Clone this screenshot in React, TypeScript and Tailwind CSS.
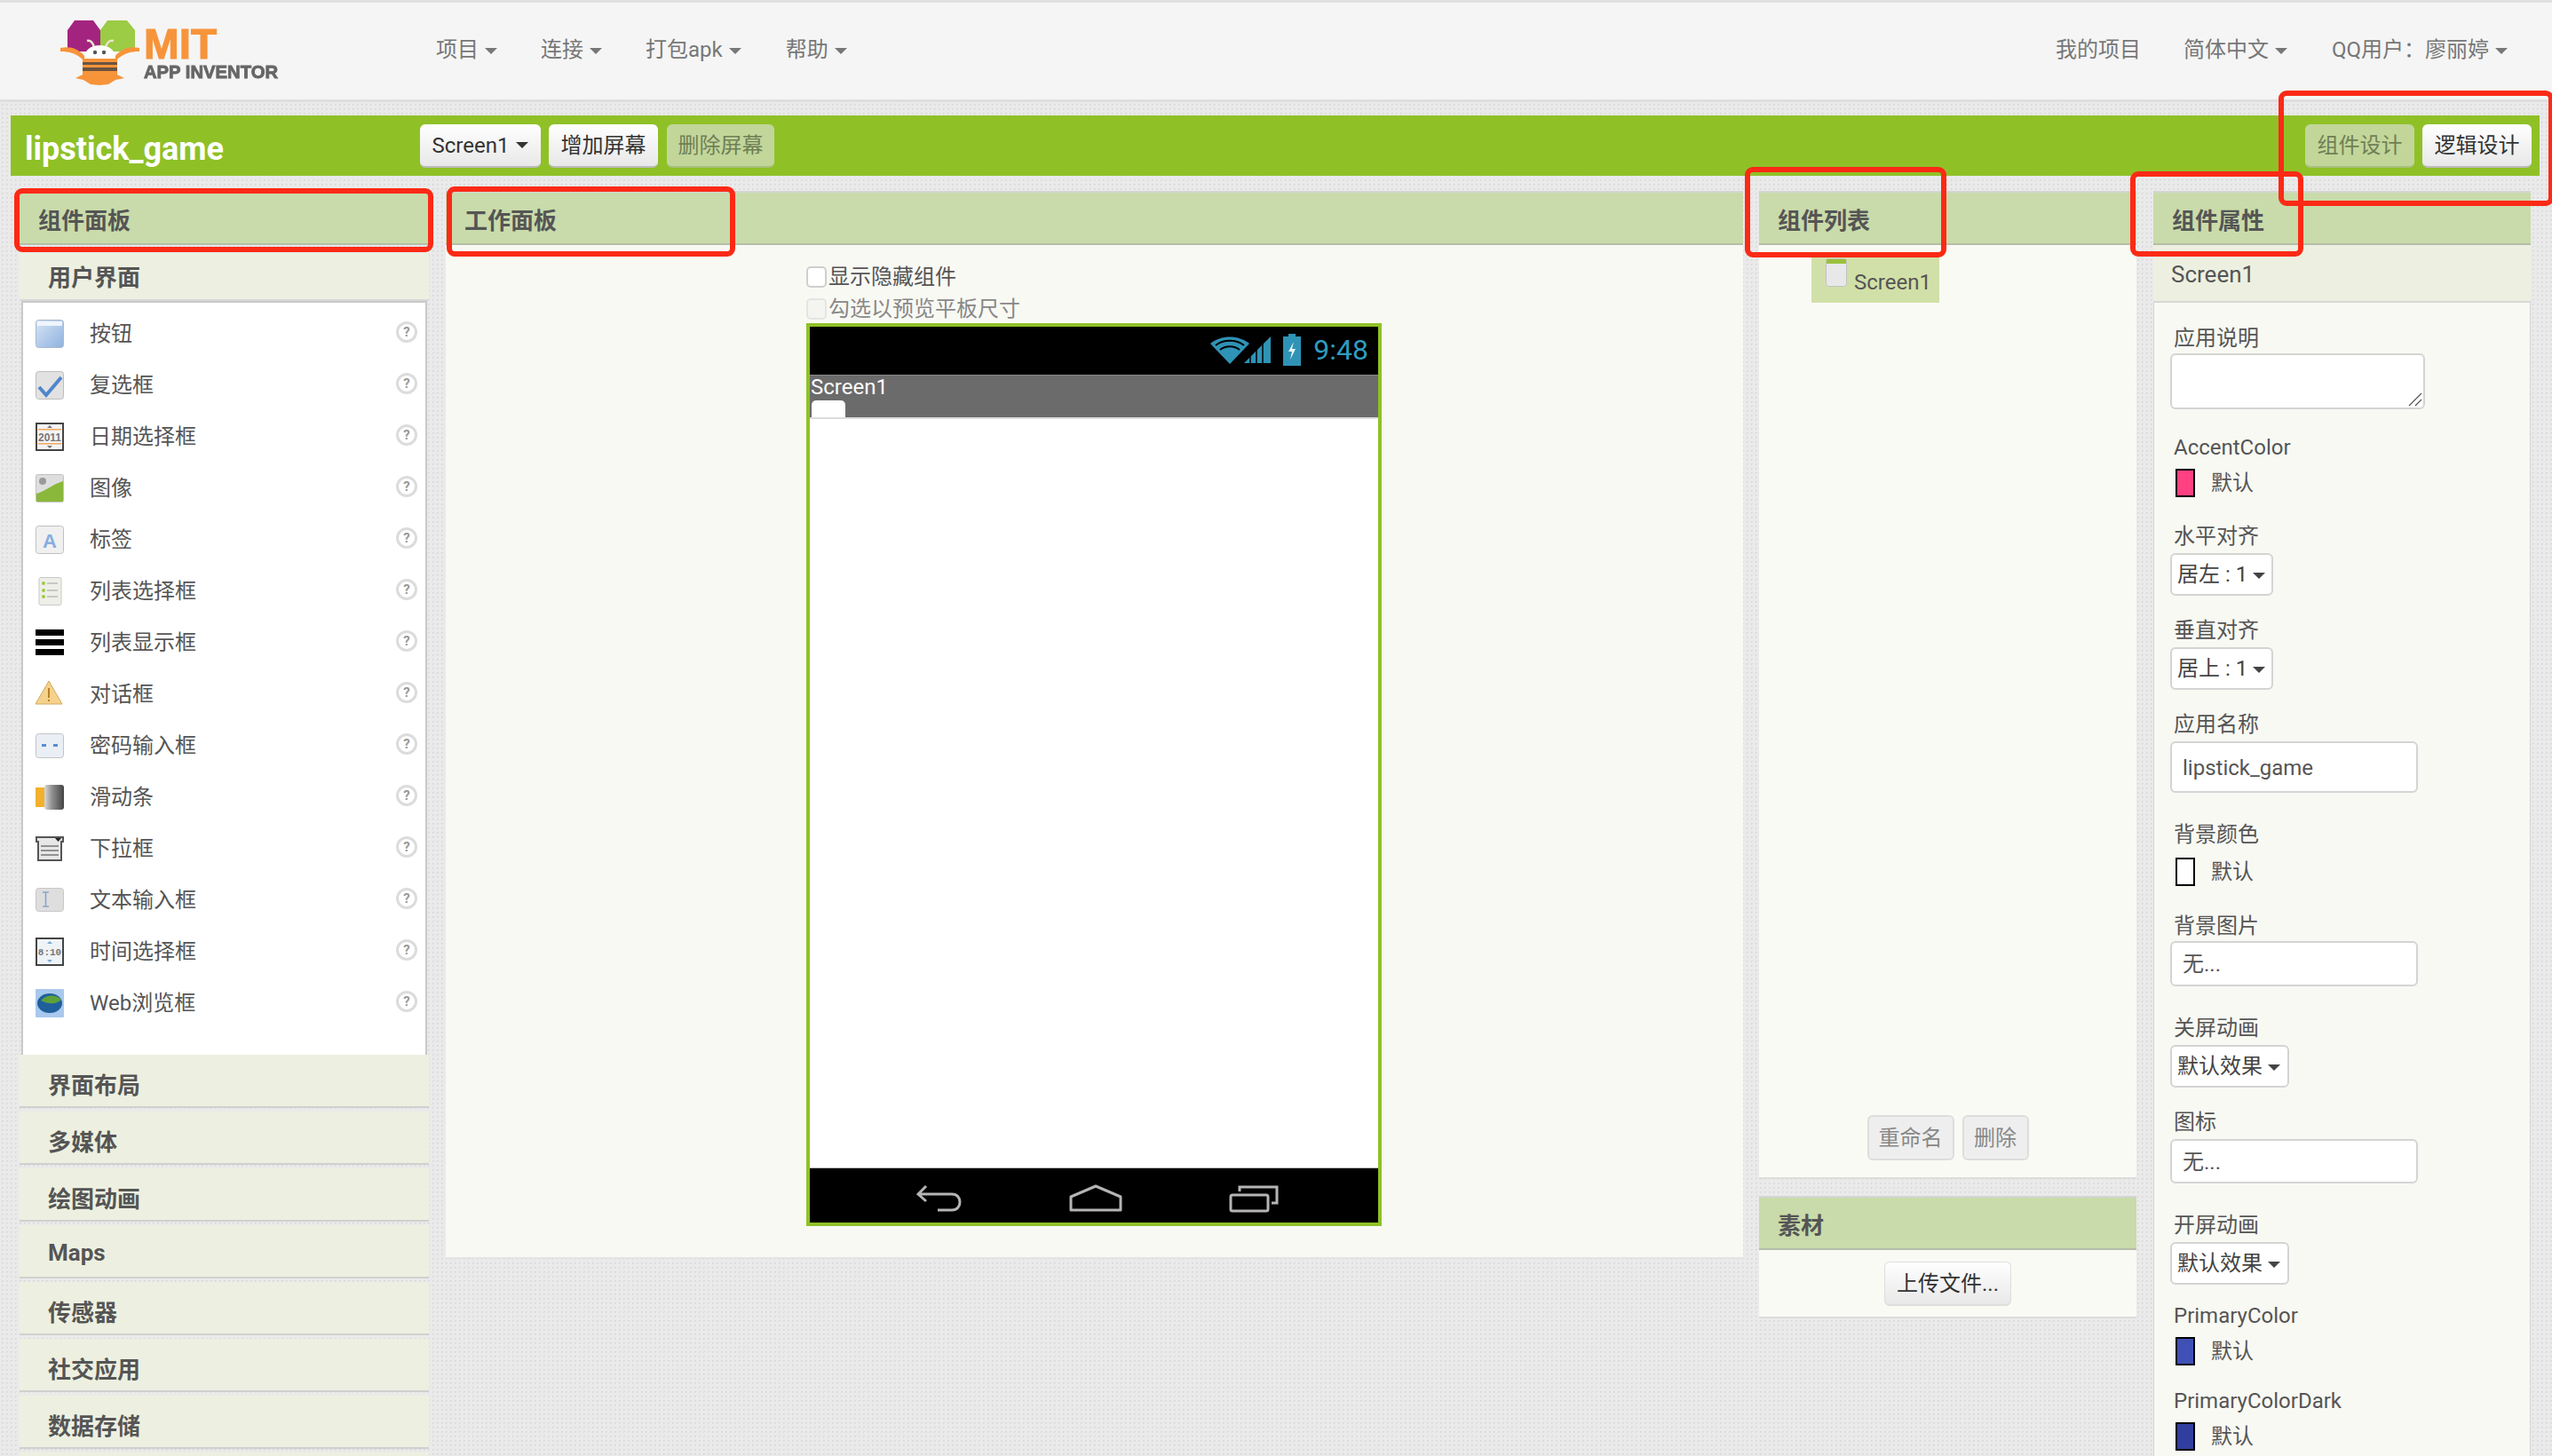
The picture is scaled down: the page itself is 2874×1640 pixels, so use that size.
import React from "react";

const Caret = ({ c = "border-t-[#777]" }: { c?: string }) => (
  <span className={`inline-block w-0 h-0 border-x-[7px] border-x-transparent border-t-[7px] ${c}`} />
);

const Logo = () => (
  <svg width="290" height="100" viewBox="0 0 290 100" className="shrink-0 blur-[0.6px]">
    <path d="M26 26 L34 15 L55 15 L63 26 L63 50 L26 50 Z" fill="#a3247f" />
    <path d="M63 26 L71 15 L93 15 L102 26 L102 50 L63 50 Z" fill="#9ccb45" />
    <path d="M18 46 C28 44 38 46 46 56 L44 60 C36 52 28 50 18 50 Z" fill="#f7943a" />
    <path d="M107 46 C97 44 87 46 79 56 L81 60 C89 52 97 50 107 50 Z" fill="#f7943a" />
    <path d="M48 38 C52 37 55 40 56 46 M78 38 C73 37 70 40 69 46" stroke="#e9e7c8" strokeWidth="2.5" fill="none" />
    <path d="M45 58 C45 48 53 43 62 43 C72 43 80 48 80 58 Z" fill="#ffffff" />
    <circle cx="57" cy="51" r="2.2" fill="#555" />
    <circle cx="67" cy="51" r="2.2" fill="#555" />
    <rect x="43" y="58" width="39" height="4" fill="#f7943a" />
    <rect x="43" y="62" width="39" height="3" fill="#6b5340" />
    <rect x="43" y="65" width="39" height="3" fill="#f7943a" />
    <rect x="43" y="68" width="39" height="4" fill="#6b5340" />
    <path d="M43 72 H82 L82 76 L90 80 L80 82 L72 87 L62 88 L52 87 L44 82 L35 80 L43 76 Z" fill="#f7943a" />
    <text x="112" y="58" fontFamily="'Liberation Sans', sans-serif" fontWeight="700" fontSize="49" fill="#f7943a" stroke="#f7943a" strokeWidth="1.2" textLength="82" lengthAdjust="spacingAndGlyphs">MIT</text>
    <text x="112" y="80" fontFamily="'Liberation Sans', sans-serif" fontWeight="700" fontSize="21" fill="#666" stroke="#666" strokeWidth="0.9" textLength="151" lengthAdjust="spacingAndGlyphs">APP INVENTOR</text>
  </svg>
);

const IconFrame = ({ children }: { children: React.ReactNode }) => (
  <svg width="32" height="32" viewBox="0 0 32 32" className="shrink-0">{children}</svg>
);

const icons: React.ReactNode[] = [
  <IconFrame key="0">
    <defs><linearGradient id="bt" x1="0" y1="0" x2="1" y2="1"><stop offset="0" stopColor="#d7e5f6" /><stop offset="1" stopColor="#8fb2de" /></linearGradient></defs>
    <rect x="0.5" y="0.5" width="31" height="31" rx="3" fill="url(#bt)" stroke="#a9b9cc" />
    <rect x="2" y="2" width="28" height="5" fill="#eef5fc" />
  </IconFrame>,
  <IconFrame key="1">
    <rect x="0.5" y="0.5" width="31" height="31" rx="3" fill="#e2e2e2" stroke="#bdbdbd" />
    <path d="M4 18 L12 27 L29 7" stroke="#4f86cc" strokeWidth="4" fill="none" />
  </IconFrame>,
  <IconFrame key="2">
    <rect x="1" y="1" width="30" height="30" fill="#f4f4f4" stroke="#444" strokeWidth="2" />
    <rect x="3" y="7" width="26" height="1.5" fill="#f2a65a" />
    <rect x="3" y="23" width="26" height="1.5" fill="#f2a65a" />
    <path d="M13 6 H19 L16 3 Z M13 26 H19 L16 29 Z" fill="#777" />
    <text x="16" y="21" textAnchor="middle" fontFamily="'Liberation Sans', sans-serif" fontSize="12" fontWeight="700" fill="#777">2011</text>
  </IconFrame>,
  <IconFrame key="3">
    <rect x="0.5" y="0.5" width="31" height="31" rx="2" fill="#dedede" stroke="#c2c2c2" />
    <path d="M1 22 C10 20 18 12 31 8 L31 31 L1 31 Z" fill="#8ab83a" />
    <circle cx="8" cy="8" r="4" fill="#9a9a9a" />
  </IconFrame>,
  <IconFrame key="4">
    <rect x="0.5" y="0.5" width="31" height="31" rx="3" fill="#f0f0f0" stroke="#c0c0c0" />
    <text x="16" y="25" textAnchor="middle" fontFamily="'Liberation Sans', sans-serif" fontSize="22" fontWeight="700" fill="#86aee0">A</text>
  </IconFrame>,
  <IconFrame key="5">
    <rect x="4" y="0.5" width="25" height="31" rx="2" fill="#efefe9" stroke="#c8c8c8" />
    <circle cx="9" cy="7" r="2" fill="#9ccb45" /><circle cx="9" cy="15" r="2" fill="#9ccb45" /><circle cx="9" cy="22" r="2" fill="#9ccb45" />
    <path d="M13 7 H25 M13 15 H25 M13 22 H25" stroke="#bbb" strokeWidth="1.5" />
  </IconFrame>,
  <IconFrame key="6">
    <rect x="0" y="1" width="32" height="7" fill="#000" />
    <rect x="0" y="12" width="32" height="7" fill="#000" />
    <rect x="0" y="23" width="32" height="7" fill="#000" />
  </IconFrame>,
  <IconFrame key="7">
    <path d="M15 1 L30 27 L0 27 Z" fill="#f5d28c" stroke="#d3a95e" />
    <rect x="14" y="9" width="2" height="11" fill="#b97f2a" />
    <rect x="14" y="22" width="2" height="2" fill="#b97f2a" />
  </IconFrame>,
  <IconFrame key="8">
    <rect x="0.5" y="2.5" width="31" height="27" rx="3" fill="#eaeef5" stroke="#c4c4c4" />
    <path d="M7 15.5 h5 M20 15.5 h5" stroke="#5b8bd0" strokeWidth="3" />
  </IconFrame>,
  <IconFrame key="9">
    <defs><linearGradient id="sl" x1="0" y1="0" x2="1" y2="0"><stop offset="0" stopColor="#d9d9d9" /><stop offset="0.4" stopColor="#8e8e8e" /><stop offset="1" stopColor="#444" /></linearGradient></defs>
    <rect x="0" y="5" width="10" height="22" fill="#f3b02c" />
    <rect x="10" y="2" width="22" height="28" rx="3" fill="url(#sl)" />
  </IconFrame>,
  <IconFrame key="10">
    <path d="M1 3 H31 V8 H29 V29 H3 V8 H1 Z" fill="#e7e7e7" stroke="#555" strokeWidth="2" />
    <path d="M6 13 H26 M6 18 H26 M6 23 H26" stroke="#777" strokeWidth="1.5" />
    <path d="M22 4 H29 L25.5 8 Z" fill="#222" />
  </IconFrame>,
  <IconFrame key="11">
    <rect x="0.5" y="2.5" width="31" height="26" rx="3" fill="#dedede" stroke="#c8c8c8" />
    <path d="M8 7 H15 M8 23 H15 M11.5 7 V23" stroke="#8aa5c9" strokeWidth="1.6" />
  </IconFrame>,
  <IconFrame key="12">
    <rect x="1" y="1" width="30" height="30" fill="#eef3f8" stroke="#444" strokeWidth="2" />
    <text x="16" y="20" textAnchor="middle" fontFamily="'Liberation Mono', monospace" fontSize="11" fontWeight="700" fill="#777">8:10</text>
    <path d="M13 7 H19 L16 4 Z M13 25 H19 L16 28 Z" fill="#7ea6d6" />
  </IconFrame>,
  <IconFrame key="13">
    <rect x="0" y="0" width="32" height="32" rx="1" fill="#a9c8ee" />
    <ellipse cx="16" cy="16" rx="14" ry="11" fill="#1f5f9c" />
    <path d="M6 13 C12 6 23 6 29 12 C23 18 14 17 6 13 Z" fill="#5da13a" />
  </IconFrame>,
];

const components = ["按钮", "复选框", "日期选择框", "图像", "标签", "列表选择框", "列表显示框", "对话框", "密码输入框", "滑动条", "下拉框", "文本输入框", "时间选择框", "Web浏览框"];
const drawers = ["界面布局", "多媒体", "绘图动画", "Maps", "传感器", "社交应用", "数据存储"];

const Help = () => (
  <span className="ml-auto mr-[9px] mb-[4px] w-[24px] h-[24px] shrink-0 rounded-full border-[3px] border-[#dcdcdc] flex items-center justify-center text-[15px] font-bold leading-none text-[#999]">?</span>
);

const PanelHeader = ({ title, className = "" }: { title: string; className?: string }) => (
  <div className={`h-[61px] bg-[#c9dbaa] border-t-[2px] border-t-[#d5d5d5] border-b-[2px] border-b-[#b5bda8] pt-[8px] flex items-center pl-[21px] text-[26px] font-bold text-[#555] ${className}`}>{title}</div>
);

const Btn = ({ children, className = "" }: { children: React.ReactNode; className?: string }) => (
  <div className={`h-[49px] pt-[1px] flex items-center justify-center rounded-[6px] bg-gradient-to-b from-white to-[#e8e8e8] border-b-[2px] border-[#bbb] text-[24px] text-[#333] ${className}`}>{children}</div>
);

const DisabledBtn = ({ children, className = "" }: { children: React.ReactNode; className?: string }) => (
  <div className={`h-[49px] pt-[1px] flex items-center justify-center rounded-[6px] bg-[#c2d69a] border-b-[2px] border-[#a9c07f] text-[24px] text-[#6f7f55] ${className}`}>{children}</div>
);

const Label = ({ children, className = "" }: { children: React.ReactNode; className?: string }) => (
  <div className={`h-[28px] leading-[28px] pt-[1px] pl-[4px] text-[24px] text-[#555] ${className}`}>{children}</div>
);

const Swatch = ({ color, className = "" }: { color: string; className?: string }) => (
  <div className={`flex items-center h-[32px] pl-[6px] ${className}`}>
    <span className={`w-[22px] h-[32px] border-[2px] border-black ${color}`} />
    <span className="ml-[18px] text-[24px] text-[#555]">默认</span>
  </div>
);

const Select = ({ text, className = "" }: { text: string; className?: string }) => (
  <div className={`h-[48px] flex items-center pl-[6px] bg-white border-[2px] border-[#d4d4d4] rounded-[6px] text-[24px] text-[#444] ${className}`}>
    <span>{text}</span>
    <Caret c="border-t-[#444] ml-[6px] mt-[3px]" />
  </div>
);

const Input = ({ text, className = "" }: { text: string; className?: string }) => (
  <div className={`flex items-center pl-[12px] pt-[1px] w-[279px] bg-white border-[2px] border-[#d4d4d4] rounded-[6px] text-[24px] text-[#555] ${className}`}>{text}</div>
);

const Red = ({ className }: { className: string }) => (
  <div className={`absolute border-[6px] border-[#fb2a16] rounded-[9px] pointer-events-none ${className}`} />
);

const NavItem = ({ text, caret, className = "" }: { text: string; caret?: boolean; className?: string }) => (
  <div className={`flex items-center text-[24px] text-[#777] pb-[3px] ${className}`}>
    <span>{text}</span>
    {caret && <Caret c="border-t-[#777] ml-[7px] mt-[3px]" />}
  </div>
);

export default function App() {
  return (
    <div className="relative w-[2874px] h-[1640px] overflow-hidden bg-[#eaeaea] bg-[radial-gradient(#d9d9d9_1px,transparent_1px)] bg-[length:5px_5px] font-['Roboto','Noto_Sans_CJK_SC',sans-serif]">
      {/* top navigation */}
      <header className="h-[115px] bg-[#f5f5f5] border-t-[3px] border-t-[#e0e0e0] border-b-[3px] border-b-[#dedede] flex items-center">
        <div className="ml-[50px] flex"><Logo /></div>
        <NavItem text="项目" caret className="ml-[151px]" />
        <NavItem text="连接" caret className="ml-[49px]" />
        <NavItem text="打包apk" caret className="ml-[49px]" />
        <NavItem text="帮助" caret className="ml-[50px]" />
        <div className="ml-auto flex items-center mr-[50px]">
          <NavItem text="我的项目" />
          <NavItem text="简体中文" caret className="ml-[48px]" />
          <NavItem text="QQ用户：廖丽婷" caret className="ml-[50px]" />
        </div>
      </header>

      {/* project toolbar */}
      <div className="ml-[12px] mt-[15px] w-[2848px] h-[68px] bg-[#8fc127] flex items-center">
        <div className="w-[461px] pl-[16px] pt-[8px] text-[36px] font-bold text-white">lipstick_game</div>
        <Btn className="w-[136px] gap-[8px]">Screen1<Caret c="border-t-[#333]" /></Btn>
        <Btn className="w-[123px] ml-[9px]">增加屏幕</Btn>
        <DisabledBtn className="w-[121px] ml-[10px]">删除屏幕</DisabledBtn>
        <DisabledBtn className="w-[123px] ml-auto">组件设计</DisabledBtn>
        <Btn className="w-[123px] ml-[9px] mr-[9px]">逻辑设计</Btn>
      </div>

      {/* panels */}
      <div className="flex items-start mt-[17px]">
        {/* palette */}
        <div className="ml-[22px] w-[461px] shrink-0">
          <PanelHeader title="组件面板" />
          <div className="mt-[9px] h-[54px] bg-[#edf0e0] border-b-[2px] border-[#d8d8d8] flex items-center pt-[4px] pl-[32px] text-[26px] font-bold text-[#555]">用户界面</div>
          <div className="mx-[2px] bg-white border-x-[2px] border-t-[2px] border-[#c9c9c9] pt-[6px] h-[849px]">
            {components.map((name, i) => (
              <div key={name} className="h-[58px] flex items-center pl-[14px]">
                {icons[i]}
                <span className="ml-[29px] text-[24px] text-[#555]">{name}</span>
                <Help />
              </div>
            ))}
          </div>
          {drawers.map((d) => (
            <div key={d} className={`h-[60px] mb-[4px] bg-[#edf0e0] border-b-[2px] border-[#d0d0d0] flex items-center pl-[32px] text-[26px] font-bold text-[#555] ${d === "Maps" ? "pt-[4px]" : "pt-[13px]"}`}>{d}</div>
          ))}
          <div className="h-[60px] bg-[#edf0e0]" />
        </div>

        {/* viewer */}
        <div className="ml-[19px] w-[1461px] shrink-0">
          <PanelHeader title="工作面板" />
          <div className="h-[1142px] bg-[#f8f9f3] border-b-[2px] border-[#e4e4e4] pt-[24px] pl-[406px]">
            <div className="h-[24px] flex items-center text-[24px] text-[#555]">
              <span className="w-[23px] h-[24px] bg-white border-[2px] border-[#cfcfcf] rounded-[5px]" />
              <span className="ml-[2px]">显示隐藏组件</span>
            </div>
            <div className="mt-[12px] h-[24px] flex items-center text-[24px] text-[#888]">
              <span className="w-[23px] h-[24px] bg-[#f4f4f0] border-[2px] border-[#e4e4e4] rounded-[5px]" />
              <span className="ml-[2px]">勾选以预览平板尺寸</span>
            </div>
            <div className="mt-[4px] w-[648px] h-[1017px] border-[4px] border-[#8fc127] flex flex-col bg-white">
              <div className="h-[54px] bg-black flex items-center justify-end pr-[11px] pb-[2px]">
                <svg width="70" height="34" viewBox="0 0 70 34" className="mr-[12px]">
                  <path d="M0 10 C12 0 32 0 44 10 L22 33 Z" fill="#2f93b5" />
                  <path d="M6 12 C15 5 29 5 38 12 M11 17 C17 12 27 12 33 17" stroke="#000" strokeWidth="2" fill="none" />
                  <path d="M38 32 L68 2 L68 32 Z" fill="#2f93b5" />
                  <path d="M45 32 V24 M52 32 V17 M59 32 V10" stroke="#000" strokeWidth="1.5" />
                </svg>
                <svg width="20" height="36" viewBox="0 0 20 36" className="mr-[14px]">
                  <rect x="6" y="0" width="8" height="4" fill="#2f93b5" />
                  <rect x="0" y="3" width="20" height="33" fill="#2f93b5" />
                  <path d="M12 9 L6 20 L10 20 L8 29 L14 17 L10 17 Z" fill="#e8f5fa" />
                </svg>
                <span className="text-[32px] text-[#2f9cc0] leading-none">9:48</span>
              </div>
              <div className="relative h-[48px] bg-[#6b6b6b] border-t-[1px] border-[#888] text-[24px] leading-[26px] text-white pl-[1px]">
                <span>Screen1</span>
                <span className="absolute left-[2px] bottom-0 w-[38px] h-[19px] bg-white rounded-t-[5px]" />
              </div>
              <div className="flex-1 bg-white border-t-[2px] border-[#ddd]" />
              <div className="h-[62px] bg-black border-t-[1px] border-[#bbb] flex items-center pt-[6px]">
                <svg width="52" height="32" viewBox="0 0 52 32" className="ml-[120px]">
                  <path d="M11 2 L2 11 L11 19 M2 11 H40 C52 11 52 29 40 29 H24" stroke="#b5b5b5" strokeWidth="3" fill="none" />
                </svg>
                <svg width="60" height="32" viewBox="0 0 60 32" className="ml-[120px]">
                  <path d="M2 29 V14 L30 2 L58 14 V29 Z" stroke="#b5b5b5" strokeWidth="3" fill="none" strokeLinejoin="round" />
                </svg>
                <svg width="56" height="32" viewBox="0 0 56 32" className="ml-[120px]">
                  <rect x="2" y="12" width="42" height="18" rx="2" stroke="#b5b5b5" strokeWidth="3" fill="none" />
                  <path d="M12 8 V3 H54 V21 H48" stroke="#b5b5b5" strokeWidth="3" fill="none" />
                </svg>
              </div>
            </div>
          </div>
        </div>

        {/* tree + assets */}
        <div className="ml-[18px] w-[425px] shrink-0">
          <PanelHeader title="组件列表" />
          <div className="h-[1052px] bg-[#fafaf5] border-b-[2px] border-[#dcdcdc] flex flex-col">
            <div className="ml-[59px] mt-[10px] w-[144px] h-[55px] bg-[#d1e0a8] flex items-start pl-[16px]">
              <svg width="24" height="32" viewBox="0 0 24 32" className="mt-[5px]">
                <rect x="0.5" y="0.5" width="23" height="31" rx="3" fill="#e8e8e8" stroke="#c2c2c2" />
                <rect x="1" y="1" width="22" height="5" fill="#9bc13c" />
              </svg>
              <span className="ml-[8px] mt-[14px] text-[24px] text-[#555]">Screen1</span>
            </div>
            <div className="mt-auto mb-[19px] flex justify-center gap-[9px]">
              <div className="w-[98px] h-[51px] rounded-[6px] bg-[#eeeeee] border-[2px] border-[#dddddd] flex items-center justify-center text-[24px] text-[#888]">重命名</div>
              <div className="w-[75px] h-[51px] rounded-[6px] bg-[#eeeeee] border-[2px] border-[#dddddd] flex items-center justify-center text-[24px] text-[#888]">删除</div>
            </div>
          </div>
          <PanelHeader title="素材" className="mt-[19px]" />
          <div className="h-[77px] bg-[#fafaf5] border-b-[2px] border-[#dcdcdc] flex justify-center pt-[13px]">
            <Btn className="w-[143px] h-[50px] border border-[#ddd]">上传文件...</Btn>
          </div>
        </div>

        {/* properties */}
        <div className="ml-[19px] w-[425px] shrink-0">
          <PanelHeader title="组件属性" />
          <div className="h-[65px] bg-[#edf0e0] border-b-[2px] border-[#d8d8d8] pl-[20px] pt-[15px] text-[26px] leading-[36px] text-[#555]">Screen1</div>
          <div className="h-[1400px] bg-[#f8f9f3] pl-[18px] pt-[25px] border-x-[1px] border-[#d4d4d4]">
            <Label>应用说明</Label>
            <div className="relative mt-[4px] w-[287px] h-[63px] bg-white border-[2px] border-[#d4d4d4] rounded-[6px]">
              <svg width="16" height="16" viewBox="0 0 16 16" className="absolute right-[1px] bottom-[1px]">
                <path d="M1 15 L15 1 M8 15 L15 8" stroke="#555" strokeWidth="1.2" />
              </svg>
            </div>
            <Label className="mt-[28px]">AccentColor</Label>
            <Swatch color="bg-[#ff4081]" className="mt-[11px]" />
            <Label className="mt-[29px]">水平对齐</Label>
            <Select text="居左 : 1" className="mt-[6px] w-[116px]" />
            <Label className="mt-[24px]">垂直对齐</Label>
            <Select text="居上 : 1" className="mt-[6px] w-[116px]" />
            <Label className="mt-[24px]">应用名称</Label>
            <Input text="lipstick_game" className="mt-[6px] h-[58px]" />
            <Label className="mt-[32px]">背景颜色</Label>
            <Swatch color="bg-white" className="mt-[13px]" />
            <Label className="mt-[30px]">背景图片</Label>
            <Input text="无..." className="mt-[4px] h-[51px]" />
            <Label className="mt-[32px]">关屏动画</Label>
            <Select text="默认效果" className="mt-[6px] w-[134px]" />
            <Label className="mt-[24px]">图标</Label>
            <Input text="无..." className="mt-[6px] h-[50px]" />
            <Label className="mt-[32px]">开屏动画</Label>
            <Select text="默认效果" className="mt-[6px] w-[134px]" />
            <Label className="mt-[20px]">PrimaryColor</Label>
            <Swatch color="bg-[#3f51b5]" className="mt-[11px]" />
            <Label className="mt-[25px]">PrimaryColorDark</Label>
            <Swatch color="bg-[#303f9f]" className="mt-[11px]" />
          </div>
        </div>
      </div>

      {/* annotation rectangles */}
      <Red className="left-[16px] top-[212px] w-[472px] h-[72px]" />
      <Red className="left-[503px] top-[210px] w-[325px] h-[79px]" />
      <Red className="left-[1965px] top-[188px] w-[227px] h-[102px]" />
      <Red className="left-[2399px] top-[193px] w-[195px] h-[96px]" />
      <Red className="left-[2566px] top-[102px] w-[310px] h-[130px]" />
    </div>
  );
}
